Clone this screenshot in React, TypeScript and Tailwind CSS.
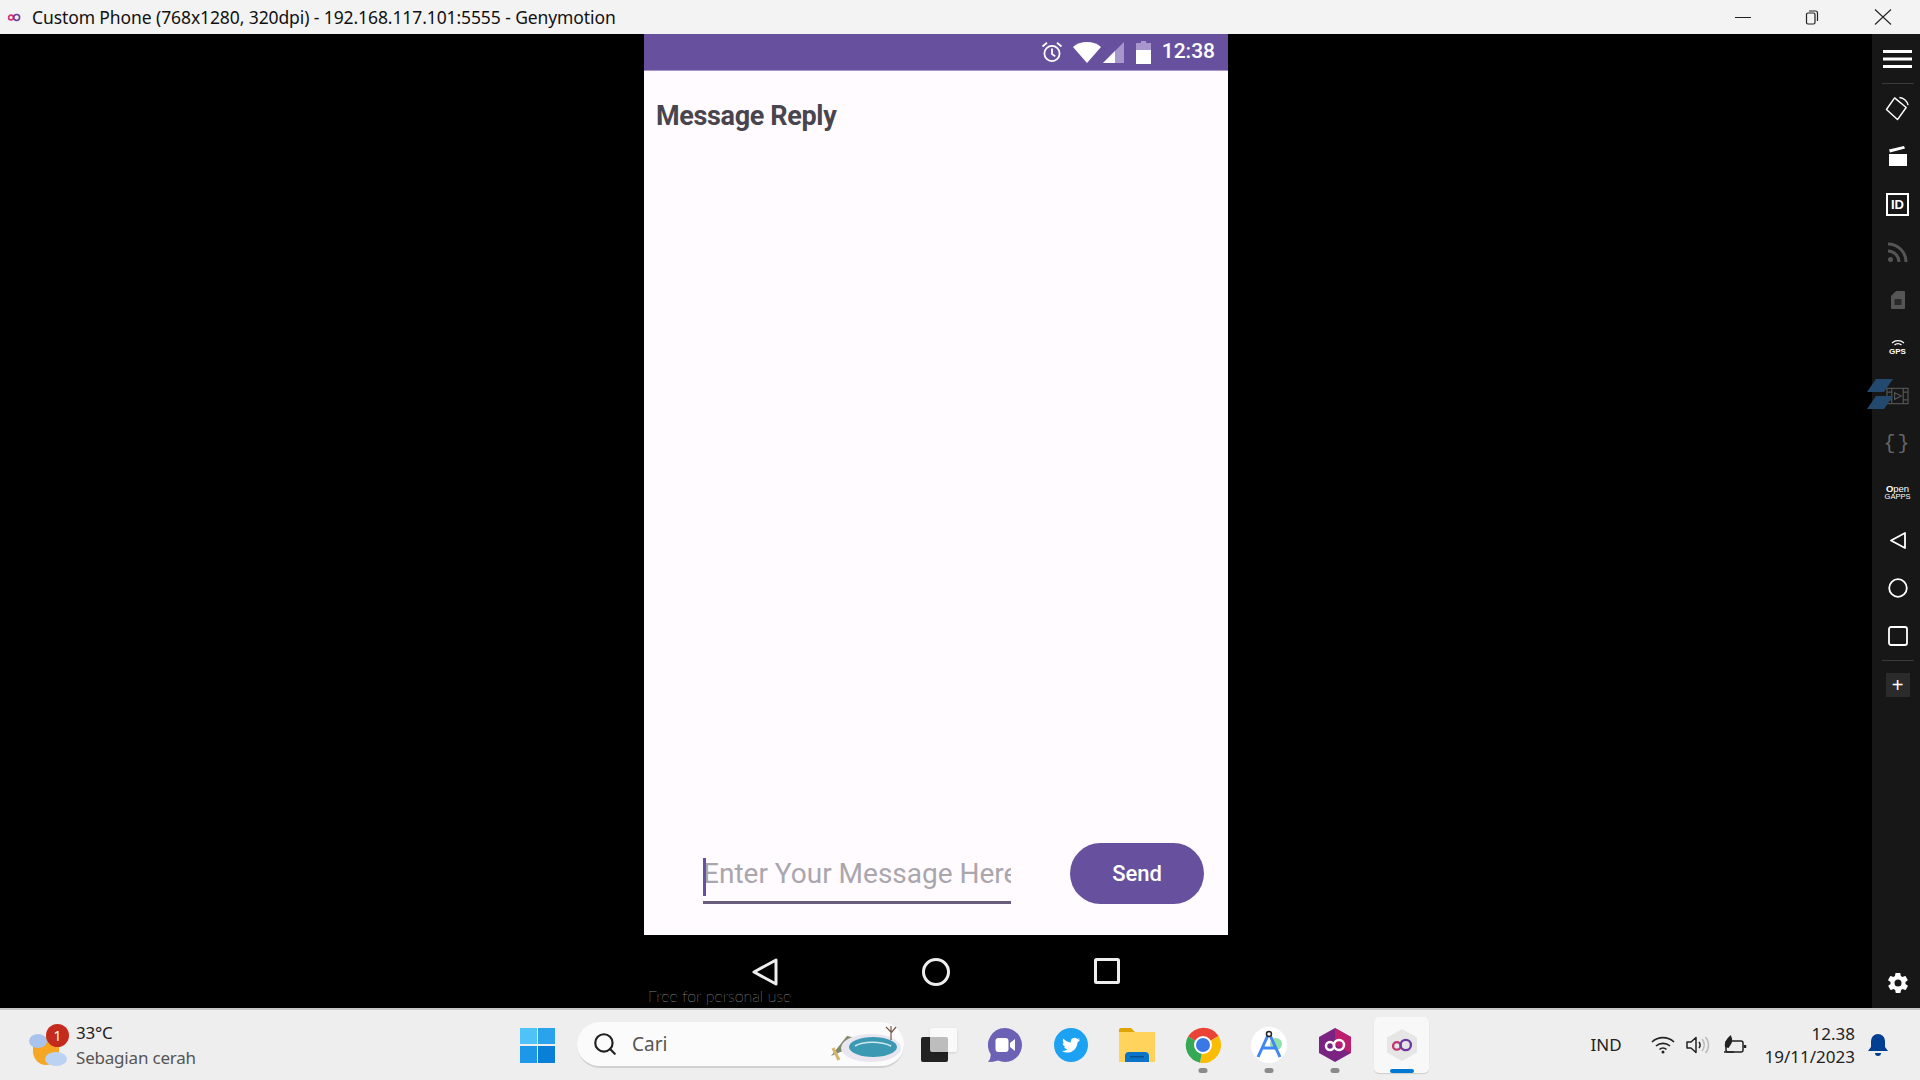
import { Search } from "lucide-react";

function GenyLogo({ className }: { className?: string }) {
  return (
    <svg viewBox="0 0 24 12" className={className} fill="none" strokeWidth="2.4">
      <circle cx="7.5" cy="6" r="3.6" stroke="#d4306f" />
      <circle cx="16" cy="6" r="4.4" stroke="#6c3a9e" />
    </svg>
  );
}

function TitleBar() {
  return (
    <div className="flex h-[34px] items-center bg-[#f3f3f3] text-[17.5px] text-[#111] [font-family:'Noto_Sans',sans-serif]">
      <GenyLogo className="ml-[6px] h-[9px] w-[16px]" />
      <span className="ml-[10px] whitespace-nowrap tracking-[-0.1px]">
        Custom Phone (768x1280, 320dpi) - 192.168.117.101:5555 - Genymotion
      </span>
      <div className="ml-auto flex items-center">
        <div className="h-px w-[16px] bg-[#222]" />
        <svg viewBox="0 0 16 16" className="ml-[53px] h-[16px] w-[16px]" fill="none" stroke="#222" strokeWidth="1.2">
          <rect x="2.5" y="4" width="8.5" height="11" rx="1.5" />
          <path d="M5 2h6.5A2 2 0 0 1 13.5 4v8" />
        </svg>
        <svg viewBox="0 0 18 16" className="ml-[54px] mr-[28px] h-[16px] w-[18px]" fill="none" stroke="#222" strokeWidth="1.1">
          <path d="M1 0.5 17 15.5M17 0.5 1 15.5" />
        </svg>
      </div>
    </div>
  );
}

function StatusBar() {
  return (
    <div className="flex h-[37px] items-center justify-end border-b border-[#a897cc] bg-[#67519f] pr-[13px]">
      <svg viewBox="0 0 22 22" className="h-[22px] w-[22px]" fill="none" stroke="#fff" strokeWidth="1.8">
        <circle cx="11" cy="12.5" r="7.6" />
        <path d="M11 7.5V13l3.2 2.4M1.5 5.5 6 1.8M20.5 5.5 16 1.8" />
      </svg>
      <svg viewBox="0 0 28 21" className="ml-[10px] h-[21px] w-[28px]">
        <path d="M14 21 0 5C3.6 1.8 8.6 0 14 0s10.4 1.8 14 5Z" fill="#fff" />
      </svg>
      <svg viewBox="0 0 21 21" className="ml-[2px] h-[21px] w-[21px]">
        <path d="M21 0v21H0Z" fill="#a897cc" />
        <path d="M12 9v12H0Z" fill="#fff" />
      </svg>
      <svg viewBox="0 0 15 23" className="ml-[12px] h-[23px] w-[15px]">
        <path d="M5 0h5v2h5v7H0V2h5Z" fill="#a897cc" />
        <rect y="9" width="15" height="14" fill="#fff" />
      </svg>
      <span className="ml-[11px] text-[21px] font-medium text-white [font-family:Roboto,sans-serif]">12:38</span>
    </div>
  );
}

function Phone() {
  return (
    <div className="flex w-[584px] flex-col">
      <StatusBar />
      <div className="flex flex-1 flex-col bg-[#fffbfe] [font-family:Roboto,sans-serif]">
        <h1 className="ml-[12px] mt-[27px] text-[27px] leading-[36px] font-bold tracking-[-0.35px] text-[#49454f]">Message Reply</h1>
        <div className="mt-auto mb-[31px] ml-[59px] flex items-end">
          <div className="relative h-[54px] w-[308px] overflow-hidden border-b-[3px] border-[#6a5d7c] pt-[5px] text-[28px] leading-[38px] whitespace-nowrap text-[#aaa6ad]">
            Enter Your Message Here
            <div className="absolute left-0 top-[8px] h-[38px] w-[3px] bg-[#67519f]" />
          </div>
          <button className="ml-[59px] h-[61px] w-[134px] rounded-full bg-[#67519f] text-[22px] font-medium text-white">Send</button>
        </div>
      </div>
      <div className="relative flex h-[73px] items-start bg-black pt-[23px]">
        <svg viewBox="0 0 26 28" className="ml-[108px] h-[28px] w-[26px]" fill="none" stroke="#eee" strokeWidth="3" strokeLinejoin="round">
          <path d="M24 2v24L2 14Z" />
        </svg>
        <svg viewBox="0 0 28 28" className="ml-[144px] h-[28px] w-[28px]" fill="none" stroke="#eee" strokeWidth="3">
          <circle cx="14" cy="14" r="12.5" />
        </svg>
        <svg viewBox="0 0 26 26" className="ml-[144px] h-[26px] w-[26px]" fill="none" stroke="#eee" strokeWidth="3">
          <rect x="1.5" y="1.5" width="23" height="23" rx="1" />
        </svg>
        <span className="absolute left-[4px] top-[51px] text-[16px] leading-[20px] font-thin whitespace-nowrap text-[#e8e8e8] [font-family:Lato,sans-serif]">
          Free for personal use
        </span>
      </div>
    </div>
  );
}

function Side({ children }: { children: React.ReactNode }) {
  return <div className="flex h-12 items-center justify-center">{children}</div>;
}

function Sidebar() {
  return (
    <div className="relative flex w-[48px] flex-col bg-[#171717] pl-[3px]">
      <svg viewBox="0 0 29 18" className="mx-auto mt-[16px] h-[18px] w-[29px]" fill="#fff">
        <rect width="29" height="3" />
        <rect y="7.5" width="29" height="3" />
        <rect y="15" width="29" height="3" />
      </svg>
      <div className="mx-auto mt-[15px] h-px w-[32px] bg-[#3a3a3a]" />
      <Side>
        <svg viewBox="0 0 26 26" className="h-[25px] w-[25px]" fill="none" stroke="#fff" strokeWidth="1.5" strokeLinejoin="round">
          <path d="M10 2 1.5 14 13 24.5 22 12Z" />
          <path d="M15 1.5c4 .5 8 3.5 9 8" />
        </svg>
      </Side>
      <Side>
        <svg viewBox="0 0 18 20" className="h-[20px] w-[18px]" fill="#fff">
          <rect y="8" width="18" height="12" />
          <path d="M0 3.5 15 0l1 2.6L1 6.5Z" />
        </svg>
      </Side>
      <Side>
        <div className="flex h-[23px] w-[23px] items-center justify-center border-2 border-white text-[13px] leading-none font-bold text-white [font-family:'Liberation_Sans',sans-serif]">ID</div>
      </Side>
      <Side>
        <svg viewBox="0 0 20 20" className="h-[20px] w-[20px]" fill="none" stroke="#555" strokeWidth="3">
          <path d="M0 2c10 0 18 8 18 18M0 9c6 0 11 5 11 11" />
          <circle cx="2.5" cy="17.5" r="2.5" fill="#555" stroke="none" />
        </svg>
      </Side>
      <Side>
        <svg viewBox="0 0 14 18" className="h-[18px] w-[14px]" fill="#555">
          <path d="M5 0h8a1 1 0 0 1 1 1v16a1 1 0 0 1-1 1H1a1 1 0 0 1-1-1V5Z" />
          <rect x="3.5" y="8" width="7" height="6" fill="#2a2a2a" />
        </svg>
      </Side>
      <Side>
        <div className="flex flex-col items-center text-white">
          <svg viewBox="0 0 14 7" className="h-[7px] w-[14px]" fill="none" stroke="#fff" strokeWidth="1.2">
            <path d="M1 3a9 9 0 0 1 12 0M3.5 5a5 5 0 0 1 7 0" />
          </svg>
          <span className="mt-px text-[8px] leading-[8px] font-bold [font-family:'Liberation_Sans',sans-serif]">GPS</span>
        </div>
      </Side>
      <Side>
        <svg viewBox="0 0 24 18" className="h-[18px] w-[23px]" fill="none" stroke="#555" strokeWidth="1.2">
          <rect x="1" y="1" width="22" height="16" />
          <path d="M6 1v16M18 1v16M1 5h5M1 13h5M18 5h5M18 13h5M9 5.5l7 3.5-7 3.5Z" />
        </svg>
      </Side>
      <Side>
        <span className="text-[20px] leading-none text-[#666] [font-family:'Liberation_Mono',monospace] tracking-[2px]">{"{}"}</span>
      </Side>
      <Side>
        <div className="flex flex-col items-center text-white [font-family:'Liberation_Sans',sans-serif]">
          <span className="text-[9.5px] leading-[9px]"><b>O</b>pen</span>
          <span className="text-[7.5px] leading-[8px]">GAPPS</span>
        </div>
      </Side>
      <Side>
        <svg viewBox="0 0 16 17" className="h-[17px] w-[16px]" fill="none" stroke="#fff" strokeWidth="1.8" strokeLinejoin="round">
          <path d="M15 1v15L1 8.5Z" />
        </svg>
      </Side>
      <Side>
        <svg viewBox="0 0 20 20" className="h-[20px] w-[20px]" fill="none" stroke="#fff" strokeWidth="1.8">
          <circle cx="10" cy="10" r="8.8" />
        </svg>
      </Side>
      <Side>
        <svg viewBox="0 0 20 20" className="h-[20px] w-[20px]" fill="none" stroke="#fff" strokeWidth="1.8">
          <rect x="1" y="1" width="18" height="18" rx="2" />
        </svg>
      </Side>
      <div className="mx-auto h-px w-[32px] bg-[#3a3a3a]" />
      <div className="mx-auto mt-[12px] flex h-[24px] w-[24px] items-center justify-center bg-[#2b2b2b] text-[20px] leading-none text-white [font-family:'Liberation_Sans',sans-serif]">+</div>
      <svg viewBox="0 0 24 24" className="mx-auto mb-[13px] mt-auto h-[24px] w-[24px]" fill="#fff">
        <path d="M19.4 13c.1-.3.1-.7.1-1s0-.7-.1-1l2.1-1.6c.2-.2.2-.4.1-.6l-2-3.5c-.1-.2-.4-.3-.6-.2l-2.5 1c-.5-.4-1.1-.7-1.7-1l-.4-2.6c0-.3-.2-.5-.5-.5h-4c-.3 0-.5.2-.5.4l-.4 2.7c-.6.2-1.2.6-1.7 1l-2.5-1c-.2-.1-.5 0-.6.2l-2 3.5c-.1.2 0 .4.1.6L4.6 11c0 .3-.1.7-.1 1s0 .7.1 1l-2.1 1.6c-.2.2-.2.4-.1.6l2 3.5c.1.2.4.3.6.2l2.5-1c.5.4 1.1.7 1.7 1l.4 2.6c0 .3.2.5.5.5h4c.3 0 .5-.2.5-.4l.4-2.7c.6-.2 1.2-.6 1.7-1l2.5 1c.2.1.5 0 .6-.2l2-3.5c.1-.2 0-.4-.1-.6ZM12 15.5a3.5 3.5 0 1 1 0-7 3.5 3.5 0 0 1 0 7Z" />
      </svg>
      <svg viewBox="0 0 26 32" className="absolute left-[-5px] top-[345px] h-[32px] w-[26px]" fill="#234a6e">
        <path d="M9 0h17l-9 13H0ZM9 17h17l-9 13H0Z" />
      </svg>
    </div>
  );
}

function Weather() {
  return (
    <div className="relative ml-[29px] h-[44px] w-[38px] shrink-0">
      <svg viewBox="0 0 38 44" className="h-[44px] w-[38px]">
        <path d="M4 14h26v14c0 8-6 14-13 14S4 36 4 28Z" fill="#f5a623" />
        <ellipse cx="9" cy="18" rx="9" ry="7" fill="#a9c4ec" />
        <ellipse cx="27" cy="36" rx="11" ry="7" fill="#bcd2f2" />
      </svg>
      <div className="absolute left-[17px] top-[1px] flex h-[23px] w-[23px] items-center justify-center rounded-full bg-[#c42b1c] text-[14px] text-white">1</div>
    </div>
  );
}

function SearchBox() {
  return (
    <div className="ml-[22px] flex h-[46px] w-[327px] items-center rounded-full border-b-2 border-[#d0d0d0] bg-[#fbfbfb] pl-[15px]">
      <Search className="h-[26px] w-[26px] text-[#222]" strokeWidth={2} />
      <span className="ml-[14px] text-[19px] text-[#555]">Cari</span>
      <svg viewBox="0 0 76 36" className="ml-auto mr-[3px] h-[36px] w-[76px]">
        <path d="M6 30 22 10l14 3-4 6Z" fill="#7f8a6a" />
        <ellipse cx="46" cy="22" rx="30" ry="14" fill="#e9e6f0" />
        <ellipse cx="48" cy="21" rx="24" ry="10" fill="#3c99b4" />
        <path d="M30 20c8-5 26-5 36 0" fill="none" stroke="#cfe9ee" strokeWidth="1.5" />
        <path d="M66 14V0M66 6l-5-5M66 7l5-6" stroke="#7a5a4a" strokeWidth="1.2" fill="none" />
        <path d="M8 22l6 12" stroke="#d8b36a" strokeWidth="3" />
      </svg>
    </div>
  );
}

function TaskIcon({ children, dot }: { children: React.ReactNode; dot?: boolean }) {
  return (
    <div className="relative flex h-[56px] w-[66px] items-center justify-center">
      {children}
      {dot && <div className="absolute bottom-0 left-1/2 h-[5px] w-[9px] -translate-x-1/2 rounded-full bg-[#8a8a8a]" />}
    </div>
  );
}

function TaskIcons() {
  return (
    <div className="ml-[2px] flex items-center">
      <TaskIcon>
        <div className="relative h-[34px] w-[36px]">
          <div className="absolute bottom-0 left-0 h-[25px] w-[27px] rounded-[2px] bg-[#222]" />
          <div className="absolute right-0 top-0 h-[24px] w-[27px] rounded-[2px] bg-white/70 shadow-sm" />
        </div>
      </TaskIcon>
      <TaskIcon>
        <svg viewBox="0 0 34 34" className="h-[34px] w-[34px]">
          <path d="M17 0a17 17 0 1 1-7 32.5Q5 34 0 34q3-3 2.600-8A17 17 0 0 1 17 0Z" fill="#6b62b5" />
          <rect x="7.500" y="10" width="13" height="14" rx="3" fill="#fff" />
          <path d="M22 15l5-4v12l-5-4Z" fill="#fff" />
        </svg>
      </TaskIcon>
      <TaskIcon>
        <svg viewBox="0 0 34 34" className="h-[34px] w-[34px]">
          <circle cx="17" cy="17" r="17" fill="#1da1f2" />
          <path d="M26 11.500c-.7.3-1.400.5-2.100.6.800-.5 1.300-1.200 1.600-2-.7.400-1.500.7-2.300.9a3.700 3.700 0 0 0-6.300 3.400c-3.100-.2-5.800-1.600-7.600-3.900-1 1.700-.5 3.800 1.100 4.900-.6 0-1.200-.2-1.700-.5 0 1.800 1.300 3.300 3 3.700-.5.100-1.100.2-1.700.1.500 1.500 1.900 2.500 3.500 2.600-1.600 1.200-3.500 1.800-5.500 1.600 6.300 4 14.900.2 15.500-8.500.8-.6 1.500-1.200 2-2Z" fill="#fff" />
        </svg>
      </TaskIcon>
      <TaskIcon>
        <svg viewBox="0 0 36 34" className="h-[34px] w-[36px]">
          <path d="M0 2a2 2 0 0 1 2-2h10l4 4h20v6H0Z" fill="#e0a400" />
          <rect y="4" width="36" height="30" fill="#ffd35c" />
          <path d="M6 34v-6a4 4 0 0 1 4-4h16a4 4 0 0 1 4 4v6Z" fill="#0a74c9" />
          <rect x="11" y="28" width="14" height="1.500" fill="#05508f" />
        </svg>
      </TaskIcon>
      <TaskIcon dot>
        <svg viewBox="0 0 36 36" className="h-[36px] w-[36px]">
          <path d="M18 18 3 9.500A18 18 0 0 1 33.600 9Z" fill="#ea4335" />
          <path d="M18 18 33.600 9A18 18 0 0 1 15 35.800Z" fill="#fbbc05" />
          <path d="M18 18 15 35.800A18 18 0 0 1 3 9.500Z" fill="#34a853" />
          <circle cx="18" cy="18" r="9" fill="#fff" />
          <circle cx="18" cy="18" r="7" fill="#3b78e7" />
        </svg>
      </TaskIcon>
      <TaskIcon dot>
        <svg viewBox="0 0 36 36" className="h-[36px] w-[36px]">
          <circle cx="18" cy="18" r="18" fill="#fff" />
          <circle cx="25" cy="17" r="6" fill="#8fe0ac" />
          <path d="M18 6 7 30M18 6l11 24M11 21h14" fill="none" stroke="#4285f4" strokeWidth="3" />
          <circle cx="18" cy="7" r="2.500" fill="#fff" stroke="#222" strokeWidth="1.500" />
        </svg>
      </TaskIcon>
      <TaskIcon dot>
        <svg viewBox="0 0 32 34" className="h-[34px] w-[32px]">
          <path d="M16 0 32 9v16l-16 9L0 25V9Z" fill="#7a2382" />
          <path d="M16 0 32 9v16L16 17Z" fill="#bb1f6d" />
          <circle cx="11" cy="18" r="4" fill="none" stroke="#fff" strokeWidth="2.500" />
          <circle cx="20" cy="17" r="5" fill="none" stroke="#fff" strokeWidth="2.500" />
        </svg>
      </TaskIcon>
      <div className="relative ml-[6px] flex h-[56px] w-[55px] items-center justify-center rounded-[5px] bg-[#f8f8f8] shadow-[0_1px_1px_#ccc]">
        <svg viewBox="0 0 32 34" className="h-[32px] w-[30px]">
          <path d="M16 0 32 9v16l-16 9L0 25V9Z" fill="#e6e6e6" />
          <circle cx="10.500" cy="18" r="4" fill="none" stroke="#c2356f" strokeWidth="2.500" />
          <circle cx="20" cy="17" r="5.500" fill="none" stroke="#6c3a9e" strokeWidth="2.500" />
        </svg>
        <div className="absolute bottom-0 left-[16px] h-[4px] w-[24px] rounded-full bg-[#0078d4]" />
      </div>
    </div>
  );
}

function Tray() {
  return (
    <div className="ml-auto flex items-center text-[#222]">
      <span className="text-[17px]">IND</span>
      <svg viewBox="0 0 24 18" className="ml-[29px] h-[18px] w-[24px]" fill="none" stroke="#222" strokeWidth="1.6">
        <path d="M1 6a16 16 0 0 1 22 0M5 10a10.500 10.500 0 0 1 14 0M8.500 13.500a5 5 0 0 1 7 0" />
        <circle cx="12" cy="16" r="1.500" fill="#222" stroke="none" />
      </svg>
      <svg viewBox="0 0 24 18" className="ml-[11px] h-[18px] w-[24px]" fill="none" strokeWidth="1.500">
        <path d="M1 6h4l5-4.500v15L5 12H1Z" stroke="#222" strokeLinejoin="round" />
        <path d="M13 6c1.500 2 1.500 4 0 6" stroke="#222" />
        <path d="M16 3c3 3.500 3 8.500 0 12M19.500 1c4 4.500 4 11.500 0 16" stroke="#bbb" />
      </svg>
      <svg viewBox="0 0 24 20" className="ml-[13px] h-[20px] w-[24px]" fill="none" stroke="#222" strokeWidth="1.500">
        <rect x="3" y="6" width="17" height="11" rx="2" />
        <path d="M22 10v3" strokeWidth="2.500" />
        <path d="M2 12C1 6 5 3 7.500 0c2 3 2.500 7 0 10l-2 3Z" fill="#222" stroke="none" />
        <path d="M1 17h10" />
      </svg>
      <div className="ml-[18px] flex flex-col items-end text-[17px] leading-[23px]">
        <span>12.38</span>
        <span>19/11/2023</span>
      </div>
      <svg viewBox="0 0 20 22" className="ml-[13px] mr-[32px] h-[22px] w-[20px]" fill="#003e92">
        <path d="M10 0a7 7 0 0 1 7 7v6l3 4H0l3-4V7a7 7 0 0 1 7-7ZM7 19h6a3 3 0 0 1-6 0Z" />
      </svg>
    </div>
  );
}

function Taskbar() {
  return (
    <div className="flex h-[72px] items-center border-t-2 border-[#c8c8c8] bg-[#eeeeee] [font-family:'Noto_Sans',sans-serif]">
      <Weather />
      <div className="ml-[9px] flex w-[128px] shrink-0 flex-col text-[17px] leading-[25px] tracking-[-0.2px]">
        <span className="text-[#222]">33°C</span>
        <span className="text-[#555]">Sebagian cerah</span>
      </div>
      <div className="ml-[316px] grid h-[35px] w-[35px] shrink-0 grid-cols-2 gap-[1.5px]">
        <div className="bg-[#4fc3f7]" />
        <div className="bg-[#2aa3ec]" />
        <div className="bg-[#1d97e8]" />
        <div className="bg-[#0a7fd8]" />
      </div>
      <SearchBox />
      <TaskIcons />
      <Tray />
    </div>
  );
}

export default function App() {
  return (
    <div className="flex h-screen flex-col overflow-hidden bg-black">
      <TitleBar />
      <div className="flex flex-1">
        <div className="w-[644px]" />
        <Phone />
        <div className="flex-1" />
        <Sidebar />
      </div>
      <Taskbar />
    </div>
  );
}
